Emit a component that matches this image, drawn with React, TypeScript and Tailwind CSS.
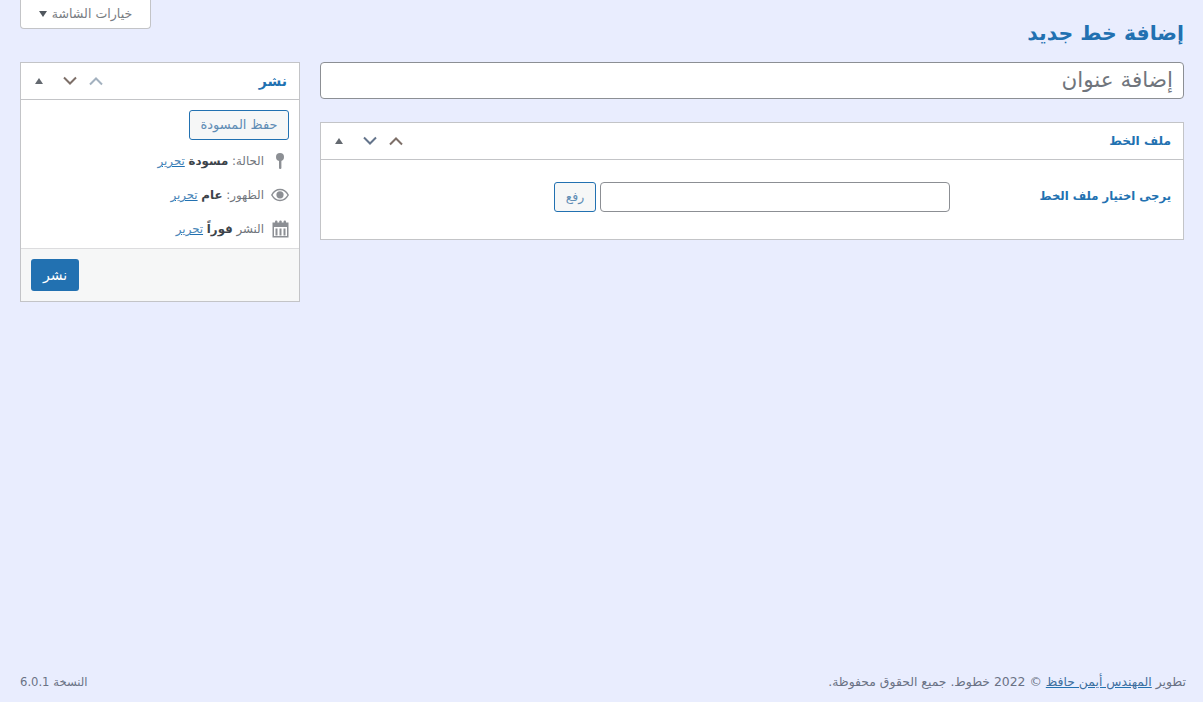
import React from 'react'

const FONT = "font-['DejaVu_Sans',sans-serif]"

const Chevron = ({ up, color }: { up?: boolean; color: string }) => (
  <svg width="16" height="10" viewBox="0 0 16 10" fill="none" stroke={color} strokeWidth="2">
    <path d={up ? 'M2 8.5 L8 2.5 L14 8.5' : 'M2 1.5 L8 7.5 L14 1.5'} />
  </svg>
)

// sort / collapse handles, left side of a box header
const BoxHandles = ({ firstColor, secondColor }: { firstColor: string; secondColor: string }) => (
  <div className="flex items-center gap-[10px]">
    <Chevron up color={firstColor} />
    <Chevron color={secondColor} />
    <div className="w-[16px] mr-[5px] flex justify-center">
      <div className="w-0 h-0 border-x-[4px] border-x-transparent border-b-[6px] border-b-[#646970]" />
    </div>
  </div>
)

const PinIcon = () => (
  <svg width="18" height="18" viewBox="0 0 18 18" fill="#8c8f94">
    <circle cx="9" cy="5" r="4" />
    <rect x="8" y="7" width="2.4" height="10" rx="1.1" />
  </svg>
)

const EyeIcon = () => (
  <svg width="18" height="14" viewBox="0 0 18 14" fill="none">
    <path d="M0.8 7 C3 3 6 1.5 9 1.5 C12 1.5 15 3 17.2 7 C15 11 12 12.5 9 12.5 C6 12.5 3 11 0.8 7 Z" stroke="#8c8f94" strokeWidth="1.5" />
    <circle cx="9" cy="6.8" r="3.6" fill="#8c8f94" />
  </svg>
)

const CalendarIcon = () => (
  <svg width="17" height="18" viewBox="0 0 17 18" fill="#8c8f94">
    <rect x="0.5" y="2.5" width="16" height="15" />
    <rect x="2" y="7" width="13" height="9" fill="#fff" />
    <rect x="3" y="0.5" width="2.4" height="4" rx="1" />
    <rect x="7.3" y="0.5" width="2.4" height="4" rx="1" />
    <rect x="11.6" y="0.5" width="2.4" height="4" rx="1" />
    <rect x="3.5" y="8.5" width="2" height="7" />
    <rect x="7.5" y="8.5" width="2" height="7" />
    <rect x="11.5" y="8.5" width="2" height="7" />
  </svg>
)

const EditLink = () => <a className="text-[#4a86b8] underline decoration-[#2271b1]" href="#">تحرير</a>

const MetaRow = ({ icon, label, value, className }: { icon: React.ReactNode; label: string; value: string; className: string }) => (
  <div className={`flex items-center ${className}`}>
    <div className="w-[18px] flex justify-center items-center">{icon}</div>
    <div className="mr-[7px] pt-[2px] text-[11.8px] text-[#70757c]">
      {label} <b className="text-[#3c434a]">{value}</b> <EditLink />
    </div>
  </div>
)

export default function App() {
  return (
    <div dir="rtl" className={`${FONT} bg-[#e9edfe] h-[702px] flex flex-col pl-[20px] pr-[19px] overflow-hidden`}>
      <div className="flex justify-between items-start h-[62px]">
        <h1 className="mt-[20px] text-[20.4px] leading-[26px] font-bold text-[#2271b1]">إضافة خط جديد</h1>
        <button className="w-[131px] h-[29px] bg-white border border-t-0 border-[#c3c4c7] rounded-b-[4px] text-[12.6px] text-[#787c82] flex items-center justify-center gap-[5px]">
          خيارات الشاشة
          <span className="w-0 h-0 border-x-[4px] border-x-transparent border-t-[6px] border-t-[#50575e]" />
        </button>
      </div>

      <div className="flex-1 flex gap-[20px] items-start">
        <div className="flex-1 flex flex-col gap-[23px]">
          <div className="h-[37px] bg-white border border-[#8c8f94] rounded-[4px] px-[10px] flex items-center text-[21.5px] text-[#70757c]">
            إضافة عنوان
          </div>
          <section className="h-[118px] bg-white border border-[#c3c4c7]">
            <div className="h-[37px] border-b border-[#c3c4c7] flex items-center justify-between pr-[12px] pl-[10px]">
              <h2 className="text-[12.2px] font-bold text-[#2271b1]">ملف الخط</h2>
              <BoxHandles firstColor="#7d6f68" secondColor="#64748b" />
            </div>
            <div className="flex items-start pt-[22px] pr-[12px]">
              <label className="w-[221px] h-[30px] flex items-center text-[11.6px] font-bold text-[#2271b1]">يرجى اختيار ملف الخط</label>
              <div className="w-[350px] h-[30px] bg-white border border-[#8c8f94] rounded-[4px]" />
              <button className="mr-[4px] w-[42px] h-[30px] bg-[#f6f7f7] border border-[#2271b1] rounded-[3px] text-[12.4px] text-[#5f8db5]">رفع</button>
            </div>
          </section>
        </div>

        <aside className="w-[280px] h-[240px] bg-white border border-[#c3c4c7] flex flex-col">
          <div className="h-[37px] shrink-0 border-b border-[#c3c4c7] flex items-center justify-between pr-[12px] pl-[10px]">
            <h2 className="text-[14px] font-bold text-[#2271b1]">نشر</h2>
            <BoxHandles firstColor="#a3b1bf" secondColor="#7d6f68" />
          </div>
          <div className="flex-1 pr-[10px] pt-[10px]">
            <button className="w-[100px] h-[30px] bg-[#f6f7f7] border border-[#2271b1] rounded-[3px] text-[13px] text-[#5f8db5]">حفظ المسودة</button>
            <MetaRow className="mt-[9px] h-[24px]" icon={<PinIcon />} label="الحالة:" value="مسودة" />
            <MetaRow className="mt-[10px] h-[24px]" icon={<EyeIcon />} label="الظهور:" value="عام" />
            <MetaRow className="mt-[10px] h-[24px]" icon={<CalendarIcon />} label="النشر" value="فوراً" />
          </div>
          <div className="h-[53px] shrink-0 bg-[#f6f7f7] border-t border-[#dcdcde] flex items-center justify-end pl-[10px]">
            <button className="w-[48px] h-[32px] bg-[#2271b1] rounded-[3px] text-[14px] text-white">نشر</button>
          </div>
        </aside>
      </div>

      <div className="h-[44px] flex items-start justify-between pt-[15px] mr-[-2px] text-[12.4px] text-[#6a7285]">
        <p>
          تطوير <a className="text-[#3f6f9f] underline decoration-[#2271b1]" href="#">المهندس أيمن حافظ</a> © 2022 خطوط. جميع الحقوق محفوظة.
        </p>
        <p className="text-[11.6px] leading-[19px]">النسخة 6.0.1</p>
      </div>
    </div>
  )
}
